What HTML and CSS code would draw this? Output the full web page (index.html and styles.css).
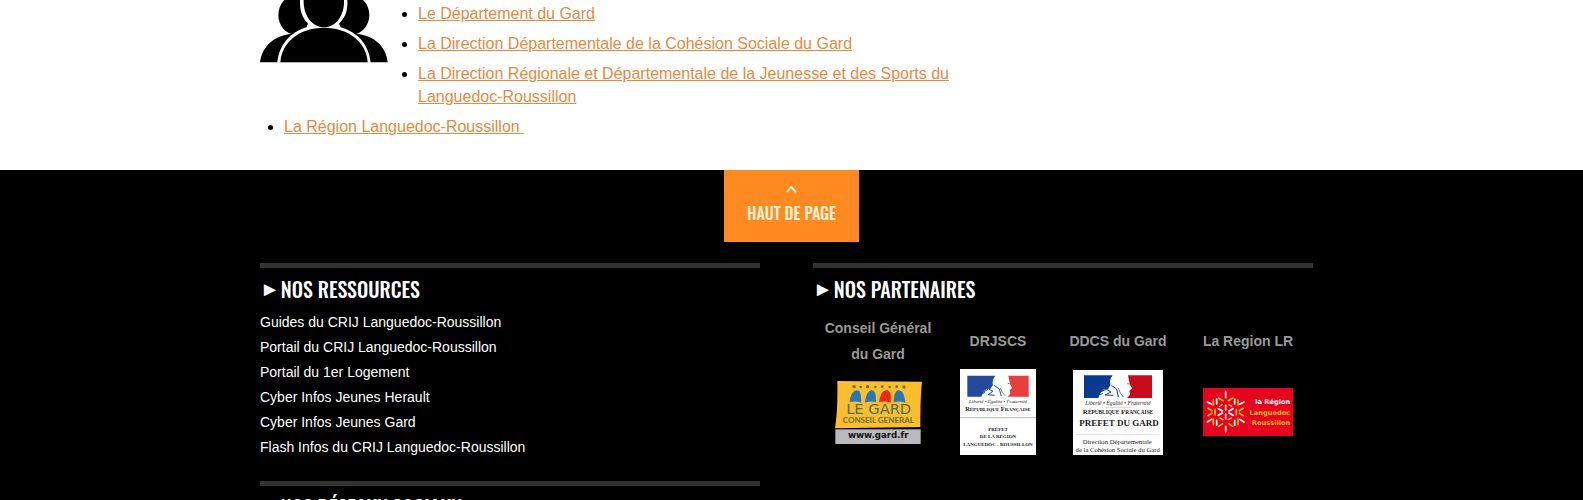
FILE: index.html
```
<!DOCTYPE html>
<html lang="fr">
<head>
<meta charset="utf-8">
<title>Partenaires</title>
<link rel="stylesheet" href="styles.css">
</head>
<body>
<main class="wrap main">
  <svg class="people" viewBox="30 0 384 189" role="img" aria-label="Groupe">
    <ellipse cx="138" cy="45" rx="53" ry="59"/>
    <ellipse cx="304" cy="45" rx="54" ry="59"/>
    <path d="M30 187C36 139 72 106 125 102H320C372 106 408 139 413 187Z"/>
    <path class="halo" d="M150 0C149 32 156 52 174 71L169 82C119 97 87 136 82 188H362C357 136 325 97 272 82L267 71C286 52 294 32 292 0Z"/>
    <path d="M161 0C159 44 185 82 222 82C259 82 284 44 282 0Z"/>
    <path d="M91 187C94 128 147 83 222 83C297 83 350 128 353 187Z"/>
  </svg>
  <ul class="links">
    <li><a href="#">Le Département du Gard</a></li>
    <li><a href="#">La Direction Départementale de la Cohésion Sociale du Gard</a></li>
    <li><a href="#">La Direction Régionale et Départementale de la Jeunesse et des Sports du Languedoc-Roussillon</a></li>
    <li><a href="#">La Région Languedoc-Roussillon&nbsp;</a></li>
  </ul>
</main>
<footer class="footer">
  <a class="top" href="#">
    <svg class="chevron" viewBox="0 0 11 7" aria-hidden="true"><path d="M1 6L5 1L10 6"/></svg>
    <span>HAUT DE PAGE</span>
  </a>
  <div class="wrap columns">
    <div class="column">
      <section class="block">
        <h2 class="title"><span class="arrow">►</span>NOS RESSOURCES</h2>
        <ul class="resources">
          <li><a href="#">Guides du CRIJ Languedoc-Roussillon</a></li>
          <li><a href="#">Portail du CRIJ Languedoc-Roussillon</a></li>
          <li><a href="#">Portail du 1er Logement</a></li>
          <li><a href="#">Cyber Infos Jeunes Herault</a></li>
          <li><a href="#">Cyber Infos Jeunes Gard</a></li>
          <li><a href="#">Flash Infos du CRIJ Languedoc-Roussillon</a></li>
        </ul>
      </section>
      <section class="block">
        <h2 class="title"><span class="arrow">►</span>NOS RÉSEAUX SOCIAUX</h2>
      </section>
    </div>
    <div class="column">
      <section class="block">
        <h2 class="title"><span class="arrow">►</span>NOS PARTENAIRES</h2>
        <table class="partners">
          <colgroup><col class="wide"><col class="slim"><col class="wide"><col class="wide"></colgroup>
          <thead>
            <tr><th scope="col">Conseil Général du Gard</th><th scope="col">DRJSCS</th><th scope="col">DDCS du Gard</th><th scope="col">La Region LR</th></tr>
          </thead>
          <tbody>
            <tr>
              <td><a href="#">
                <svg class="logo gard" viewBox="42 30 261 189">
                  <path fill="#fdbd2c" d="M49 30L303 32C298 80 298 130 298 168L42 172C49 130 50 80 49 30Z"/>
                  <rect x="43" y="175" width="256" height="44" fill="#b9babd"/>
                  <g fill="#55792f"><circle cx="99" cy="47" r="5"/><circle cx="119" cy="48" r="4"/><circle cx="140" cy="47" r="5"/><circle cx="163" cy="48" r="4"/><circle cx="184" cy="47" r="4"/><circle cx="206" cy="48" r="4"/><circle cx="227" cy="47" r="4"/><circle cx="249" cy="48" r="5"/></g>
                  <g fill="#2878b6"><path d="M86 93C88 70 98 57 109 58C119 59 120 72 121 95Q104 89 86 93Z"/><path d="M132 95C134 72 142 57 153 58C165 60 165 75 165 94Q147 89 132 95Z"/><path d="M218 94C219 70 224 57 234 58C246 60 251 75 253 95Q235 89 218 94Z"/></g>
                  <path fill="#e32b26" d="M174 94C177 70 187 56 198 58C209 60 211 74 209 95Q191 89 174 94Z"/>
                  <text class="le-gard" x="173" y="130">LE GARD</text>
                  <text class="conseil" x="172" y="155">CONSEIL GENERAL</text>
                  <text class="site" x="172" y="202">www.gard.fr</text>
                </svg></a></td>
              <td><a href="#">
                <svg class="logo region" viewBox="33 27 228 258">
                  <path fill="#fff" d="M33 27H261V285H33Z"/>
                  <path fill="#24489c" d="M55 47H139Q128 60 132 75L124 87Q105 83 97 110H55Z"/>
                  <path fill="#e5403c" d="M178 47H239V110H176L184 101L182 91L189 84L183 72Z"/>
                  <path fill="none" stroke="#24489c" stroke-width="3" d="M98 99L119 87L132 94L117 104L137 106M86 105L108 98M135 76L151 87L157 108"/>
                  <path fill="none" stroke="#555" stroke-width="2" d="M176 70L183 71M154 84Q158 98 169 108"/>
                  <text class="serif-logo motto" x="147" y="129">Liberté • Égalité • Fraternité</text>
                  <path stroke="#888" d="M112 136H182"/>
                  <text class="serif-logo repub" x="147" y="154">R<tspan class="small">ÉPUBLIQUE</tspan> F<tspan class="small">RANÇAISE</tspan></text>
                  <path stroke="#bbb" stroke-width="3" d="M33 173H261"/>
                  <g class="serif-logo prefet"><text x="147" y="212">PRÉFET</text><text x="147" y="235">DE LA RÉGION</text><text x="147" y="259">LANGUEDOC - ROUSSILLON</text></g>
                </svg></a></td>
              <td><a href="#">
                <svg class="logo ddcs" viewBox="30 30 270 255">
                  <path fill="#fff" d="M30 30H300V285H30Z"/>
                  <path fill="#073b91" d="M63 46H149Q138 60 142 75L135 88Q116 82 106 114H63Z"/>
                  <path fill="#c90c1c" d="M195 46H267V114H192L201 104L199 93L207 85L200 72Z"/>
                  <path fill="none" stroke="#073b91" stroke-width="3" d="M104 99L130 88L144 96L126 105L151 106M94 108L119 101M145 76L161 87L166 111"/>
                  <path fill="none" stroke="#444" stroke-width="2" d="M192 71L200 72M166 84Q170 101 181 111"/>
                  <text class="serif-logo motto large" x="165" y="135">Liberté • Égalité • Fraternité</text>
                  <path stroke="#888" d="M125 143H205"/>
                  <text class="serif-logo repub large" x="165" y="163">R<tspan class="small">ÉPUBLIQUE</tspan> F<tspan class="small">RANÇAISE</tspan></text>
                  <text class="serif-logo dept" x="168" y="198">PREFET DU GARD</text>
                  <path stroke="#ccc" stroke-width="2" d="M38 224H292"/>
                  <g class="serif-logo direction"><text x="163" y="252">Direction Départementale</text><text x="164" y="275">de la Cohésion Sociale du Gard</text></g>
                </svg></a></td>
              <td><a href="#">
                <svg class="logo lr" viewBox="39 39 270 144">
                  <path fill="#e5031d" d="M39 39H309V183H39Z"/>
                  <g fill="none" stroke-width="5" stroke-linecap="round">
                    <path stroke="#fff" d="M107 50V68M107 91V105M107 117V132M97 108L85 101M117 108L129 101M97 114L85 121M117 114L129 121M107 154V170M52 81L65 88M52 141L65 133M162 81L149 88M162 141L149 133M80 87V72M134 87V72M80 136V151M134 136V151"/>
                    <path stroke="#ffb625" d="M86 69L99 77M128 69L115 77M70 75V90M144 75V90M70 132V149M144 132V149M54 100L66 107M54 122L66 115M160 100L148 107M160 122L148 115M89 94L97 89M125 94L117 89M90 129L99 134M124 129L115 134M86 154L98 146M128 154L116 146M75 103V119M139 103V119"/>
                  </g>
                  <g class="lr-text"><text fill="#fff" x="301" y="87">la Région</text><text fill="#ffb625" x="301" y="119">Languedoc</text><text fill="#ffb625" x="301" y="150">Roussillon</text></g>
                </svg></a></td>
            </tr>
          </tbody>
        </table>
      </section>
    </div>
  </div>
</footer>
</body>
</html>
```
FILE: styles.css
```
* { box-sizing: border-box; }
body {
  margin: 0;
  height: 100vh;
  overflow: hidden;
  background: #fff;
  color: #000;
  font-family: "Liberation Sans", Arial, sans-serif;
}
ul { margin: 0; padding: 0; }
.wrap { max-width: 1063px; margin: 0 auto; }

.main { padding: 0 343px 32px 0; }
.people { float: left; width: 128px; height: 63px; margin: 0 30px 30px 0; }
.halo { fill: #fff; }
.links { padding-top: 2px; font-size: 16px; line-height: 23px; }
.links li { margin: 0 0 7px 24px; }
.links li:last-child { margin-bottom: 0; }
.links a { color: #e58a42; text-decoration: underline; }

.footer { min-height: 100vh; background: #000; color: #fff; }
.top {
  display: flex;
  flex-direction: column;
  align-items: center;
  gap: 8px;
  width: 135px;
  height: 72px;
  margin: 0 auto 21px;
  padding-top: 16px;
  background: #ff8a22;
  color: #fff3d6;
  font: 500 16px/24px Oswald, "Liberation Sans Narrow", "Liberation Sans", sans-serif;
  text-decoration: none;
}
.chevron { width: 11px; height: 7px; flex: none; fill: none; stroke: #fff3d6; stroke-width: 2; }

.columns { display: grid; grid-template-columns: 1fr 1fr; gap: 53px; padding-right: 10px; }
.block { border-top: 5px solid #333; margin-bottom: 21px; }
.title {
  display: flex;
  align-items: center;
  gap: 1px;
  height: 42px;
  margin: 0;
  font: 500 20px/42px Oswald, "Liberation Sans Narrow", "Liberation Sans", sans-serif;
}
.arrow { font: 20px/42px "Liberation Sans", sans-serif; }
.resources { list-style: none; font-size: 14px; line-height: 25px; }
.resources a { color: #fff; text-decoration: none; }

.partners { width: 100%; margin-top: 5px; table-layout: fixed; border-collapse: collapse; }
.wide { width: 26%; }
.slim { width: 22%; }
.partners th { padding: 0 8px; color: #999; font-size: 14px; line-height: 26px; }
.partners td { height: 90px; padding: 0; vertical-align: middle; }
.logo { display: block; margin: 0 auto; }
.gard { width: 87px; height: 63px; }
.region { width: 76px; height: 86px; }
.ddcs { width: 90px; height: 85px; }
.lr { width: 90px; height: 48px; }

.logo text { text-anchor: middle; }
.serif-logo { font-family: "Liberation Serif", serif; fill: #222; }
.le-gard { font: 44px "DejaVu Sans", sans-serif; fill: #44705f; }
.conseil { font: bold 24px Lato, sans-serif; fill: #62713c; }
.site { font: bold 26px "DejaVu Sans", sans-serif; fill: #111; }
.motto { font-size: 15px; font-style: italic; }
.motto.large { font-size: 17px; }
.repub { font-size: 19px; font-weight: bold; }
.repub.large { font-size: 21px; }
.small { font-size: 15px; }
.large .small { font-size: 16px; }
.prefet { font-size: 15px; font-weight: bold; }
.dept { font-size: 27px; font-weight: bold; }
.direction { font-size: 20px; }
.logo .lr-text text { font: bold 20px "DejaVu Sans", sans-serif; text-anchor: end; }
```
